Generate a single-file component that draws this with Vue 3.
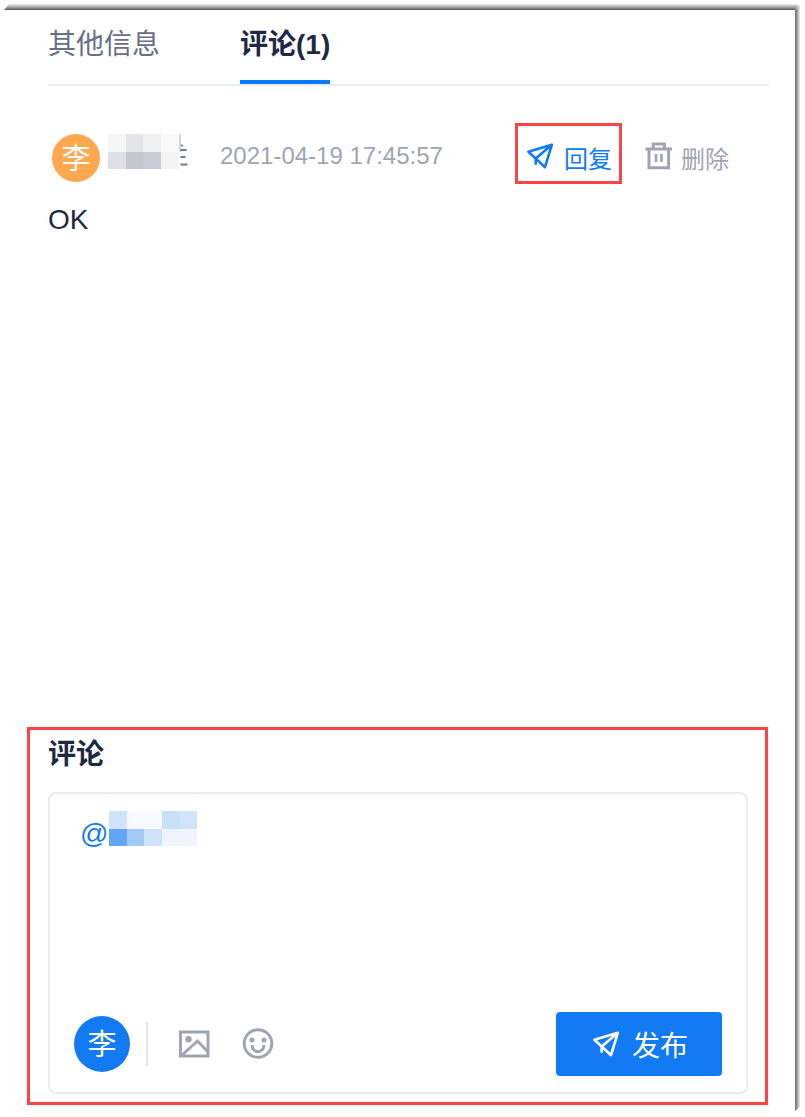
<script setup>
const nameMosaic = ['#f5f6f8', '#e4e5e9', '#eff0f2', '#f9f9fa', '#dedfe4', '#c4c7cf', '#c9ccd5', '#f2f4f6']
const mentionMosaic = [
  '#cfe3fc', '#f7fbff', '#f7fbff', '#c8dffa', '#d1e4fc',
  '#61a5f5', '#a3c9f8', '#cfe2fc', '#edf4fe', '#eff6ff'
]
const plane = 'M25.800 2.800L2.400 9.700L9.700 16.500L19 25.200zM25.800 2.800L9.700 16.500V22.800'
</script>

<template>
  <div class="page">
    <main class="panel">
      <nav class="tabs">
        <span class="tab">其他信息</span>
        <span class="tab active">评论(1)</span>
      </nav>

      <section class="comment">
        <header class="meta">
          <span class="avatar small">李</span>
          <span class="mosaic name">
            <i v-for="(c, i) in nameMosaic" :key="i" :style="{ background: c }"></i>
          </span>
          <svg class="tail" width="10" height="35" viewBox="0 0 10 35">
            <path d="M0 0h2v18h-2z" />
            <path d="M2 11l2 1M1.500 16h6M1.500 23h5M1.500 30.500h7" />
          </svg>
          <time>2021-04-19 17:45:57</time>
          <a class="reply">
            <svg width="28" height="28" viewBox="0 0 28 28">
              <path :d="plane" />
            </svg>
            <span>回复</span>
          </a>
          <a class="remove">
            <svg width="28" height="30" viewBox="0 0 28 30">
              <path d="M.500 8h26.500M8.200 7V3h11.200V7M4 8v18.700h19.600V8" stroke-width="3" />
              <path d="M11 13v8M16.500 13v8" stroke-width="2.600" />
            </svg>
            <span>删除</span>
          </a>
        </header>
        <p class="body">OK</p>
      </section>

      <section class="composer">
        <h2>评论</h2>
        <div class="editor">
          <div class="input">
            <span class="at">@</span>
            <span class="mosaic mention">
              <i v-for="(c, i) in mentionMosaic" :key="i" :style="{ background: c }"></i>
            </span>
          </div>
          <footer class="toolbar">
            <span class="avatar large">李</span>
            <span class="divider"></span>
            <svg class="picture" width="32" height="28" viewBox="0 0 32 28">
              <path d="M2.500 2h27.500v24H2.500zM3 26L19.500 11L30 22" />
              <circle cx="10.500" cy="9.200" r="3.200" />
            </svg>
            <svg class="smile" width="32" height="32" viewBox="0 0 32 32">
              <circle class="ring" cx="16" cy="15.500" r="13.800" />
              <circle cx="10" cy="12" r="2.500" />
              <circle cx="22" cy="12" r="2.500" />
              <path d="M9.900 17c.8 9 11.400 9 12.200 0" />
            </svg>
            <button class="publish">
              <svg width="28" height="28" viewBox="0 0 28 28">
                <path :d="plane" />
              </svg>
              <span>发布</span>
            </button>
          </footer>
        </div>
      </section>
    </main>
    <div class="edge top"></div>
    <div class="edge right"></div>
  </div>
</template>

<style>
body {
  background: #fff;
}
</style>

<style scoped>
.page {
  position: relative;
  box-sizing: border-box;
  width: 805px;
  height: 1117px;
  padding-top: 10px;
  overflow: hidden;
  background: #fff;
  color: #202944;
  font-family: "Liberation Sans", "Noto Sans CJK SC", sans-serif;
}
.page * {
  box-sizing: border-box;
}
.panel {
  display: flex;
  flex-direction: column;
  width: 795px;
  height: 1095px;
}
.tabs {
  display: flex;
  gap: 80px;
  height: 76px;
  margin: 0 26px 0 48px;
  border-bottom: 2px solid #e9ecf0;
  font-size: 28px;
}
.tab {
  width: 112px;
  height: 74px;
  line-height: 70px;
  color: #686f86;
  white-space: nowrap;
}
.tab.active {
  width: 90px;
  color: #202944;
  font-weight: 700;
  border-bottom: 4px solid #0a7aff;
}
.comment {
  padding: 37px 0 0 52px;
}
.meta {
  display: flex;
  height: 61px;
  align-items: flex-start;
}
.avatar {
  display: flex;
  align-items: center;
  justify-content: center;
  flex: none;
  padding-top: 2px;
  border-radius: 50%;
  color: #fff;
  font-size: 29px;
  line-height: 1;
}
.avatar.small {
  width: 48px;
  height: 48px;
  margin-top: 11px;
  background: #ffa850;
}
.avatar.large {
  width: 56px;
  height: 56px;
  background: #127af2;
}
.mosaic {
  display: grid;
  flex: none;
  grid-template-rows: 18px 17px;
}
.name {
  grid-template-columns: 18px 17px 18px 18px;
  margin: 11px 0 0 8px;
}
.tail {
  flex: none;
  margin-top: 11px;
}
time {
  flex: none;
  width: 326px;
  padding-left: 31px;
  font-size: 24px;
  line-height: 66px;
  color: #a0a5b2;
  white-space: nowrap;
}
.reply {
  display: flex;
  flex: none;
  width: 107px;
  height: 61px;
  padding-left: 8px;
  border: 3px solid #fc4447;
  color: #127af2;
  font-size: 24px;
}
.reply svg {
  margin-top: 16px;
}
.reply span {
  margin-left: 10px;
  line-height: 68px;
}
.remove {
  display: flex;
  flex: none;
  margin-left: 23px;
  color: #a0a5b2;
  font-size: 24px;
}
.remove svg {
  margin-top: 18px;
}
.remove span {
  margin-left: 8px;
  line-height: 74px;
}
svg path {
  fill: none;
  stroke: currentColor;
}
.tail path:first-child {
  fill: #d5d6db;
  stroke: none;
}
.tail path:last-child {
  stroke: #727890;
  stroke-width: 1.9;
}
.reply svg path,
.publish svg path {
  stroke-width: 2.6;
  stroke-linejoin: round;
}
.body {
  margin: 20px 0 0 -4px;
  font-size: 28px;
  line-height: 32px;
}
.composer {
  width: 741px;
  height: 378px;
  margin: auto 0 0 27px;
  padding: 3px 17px 0 18px;
  border: 3px solid #fc4447;
}
h2 {
  margin: 0;
  height: 59px;
  font-size: 28px;
  line-height: 44px;
}
.editor {
  display: flex;
  flex-direction: column;
  justify-content: space-between;
  width: 700px;
  height: 302px;
  border: 2px solid #eaebec;
  border-radius: 8px;
}
.input {
  display: flex;
  padding: 17px 0 0 30px;
}
.at {
  width: 29px;
  height: 40px;
  font-size: 28px;
  line-height: 45px;
  color: #127af2;
}
.mention {
  grid-template-columns: 18px 17px 18px 18px 17px;
}
.toolbar {
  display: flex;
  align-items: center;
  height: 64px;
  margin: 0 24px 16px;
  color: #a0a5b2;
}
.divider {
  width: 2px;
  height: 44px;
  margin-left: 16px;
  background: #e4e5e7;
}
.picture {
  margin-left: 30px;
}
.smile {
  margin-left: 32px;
}
.picture path,
.smile path,
.smile .ring {
  stroke-width: 3;
}
.picture circle,
.smile circle {
  fill: currentColor;
}
.smile .ring {
  fill: none;
  stroke: currentColor;
}
.publish {
  display: flex;
  align-items: center;
  width: 166px;
  height: 64px;
  margin-left: auto;
  padding: 0 0 0 36px;
  border: 0;
  border-radius: 4px;
  background: #127af2;
  color: #fff;
  font: inherit;
  font-size: 28px;
}
.publish span {
  margin: 6px 0 0 12px;
  line-height: 60px;
}
.edge {
  position: absolute;
}
.edge.top {
  top: 4px;
  left: 4px;
  width: 796px;
  height: 6px;
  background: linear-gradient(#eee, #ccc 25%, #999 60%, #555);
  clip-path: polygon(5px 0, 100% 0, calc(100% - 5px) 100%, 0 100%);
  border-top-right-radius: 5px;
}
.edge.right {
  top: 5px;
  left: 795px;
  width: 5px;
  height: 1106px;
  background: linear-gradient(90deg, #6b6b6b, #999 40%, #ccc 75%, #eee);
  clip-path: polygon(0 5px, 100% 0, 100% calc(100% - 4px), 0 100%);
}
</style>
